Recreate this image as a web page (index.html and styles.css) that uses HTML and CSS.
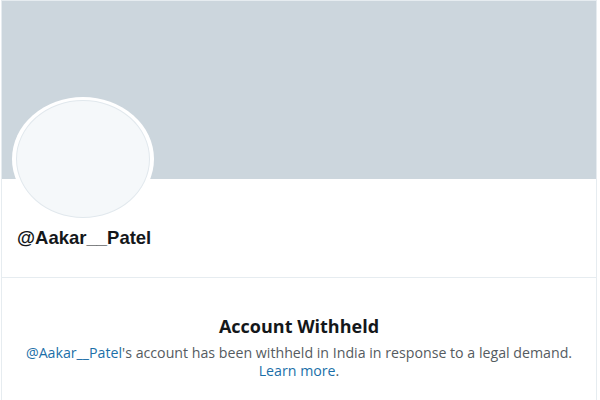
FILE: index.html
```html
<!DOCTYPE html>
<html>
<head>
<meta charset="utf-8">
<link rel="stylesheet" href="styles.css">
</head>
<body>
<div class="page">
  <div class="banner"></div>
  <div class="header">
    <div class="avatar"><div class="avatar-inner"></div></div>
    <div class="handle">@Aakar__Patel</div>
  </div>
  <div class="withheld">
    <h2 class="title">Account Withheld</h2>
    <p class="msg"><a class="link" href="#">@Aakar__Patel</a>'s account has been withheld in India in response to a legal demand.<br><a class="link" href="#">Learn more</a>.</p>
  </div>
</div>
</body>
</html>
```
FILE: styles.css
```css
html, body { margin: 0; padding: 0; background: #fff; }
body { font-family: "Open Sans", "Noto Sans", sans-serif; }
.page {
  margin-left: 1px;
  width: 596px;
  height: 400px;
  border-left: 1px solid #e6ecf0;
  border-right: 1px solid #e6ecf0;
  border-top: 1px solid #e6ecf0;
  box-sizing: border-box;
}
.banner { height: 178px; background: #ccd6dd; }
.header {
  display: flow-root;
  height: 98px;
  border-bottom: 1px solid #e6ecf0;
  padding-left: 10px;
}
.avatar {
  width: 142px;
  height: 124px;
  margin-top: -82px;
  border-radius: 50%;
  background: #fff;
  display: flex;
  align-items: center;
  justify-content: center;
}
.avatar-inner {
  width: 134px;
  height: 118px;
  border-radius: 50%;
  background: #f5f8fa;
  border: 1px solid #e1e8ed;
  box-sizing: border-box;
}
.handle {
  margin-top: 6px;
  margin-left: 5px;
  font-family: "Liberation Sans", Arial, sans-serif;
  font-weight: bold;
  font-size: 18.5px;
  color: #14171a;
}
.withheld { text-align: center; padding-top: 36px; }
.title {
  margin: 0;
  font-size: 18px;
  font-weight: 700;
  color: #14171a;
  line-height: 24px;
}
.msg {
  margin: 6px 0 0;
  font-size: 14.2px;
  line-height: 17.5px;
  color: #555b61;
}
.link { color: #1b6fa8; text-decoration: none; }
```
